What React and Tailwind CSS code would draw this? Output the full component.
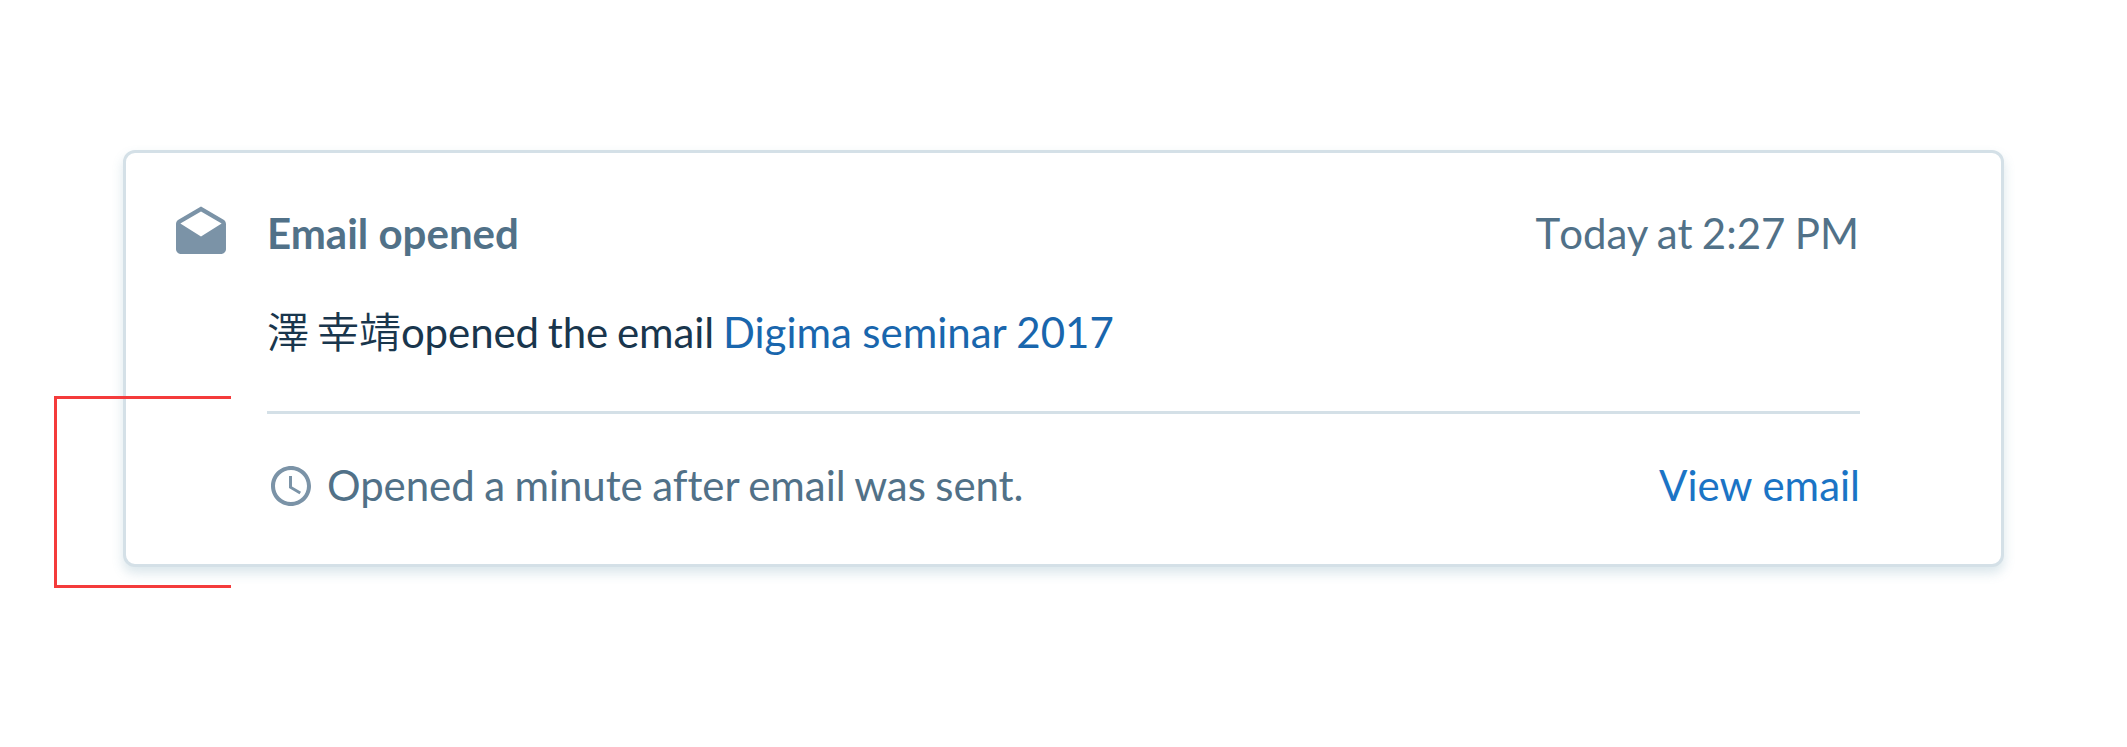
function DraftsIcon() {
  return (
    <svg viewBox="0 0 24 24" className="h-[60px] w-[60px] shrink-0 fill-[#7b93a7]" aria-hidden="true">
      <path d="M21.99 8c0-.72-.37-1.35-.94-1.7L12 1 2.95 6.3C2.38 6.65 2 7.28 2 8v10c0 1.1.9 2 2 2h16c1.1 0 2-.9 2-2l-.01-10zM12 13L3.74 7.84 12 3l8.26 4.84L12 13z" />
    </svg>
  );
}

function ClockIcon() {
  return (
    <svg viewBox="0 0 24 24" className="mt-[2px] h-12 w-12 shrink-0 fill-[#7b93a7]" aria-hidden="true">
      <path d="M11.99 2C6.47 2 2 6.48 2 12s4.47 10 9.99 10C17.52 22 22 17.52 22 12S17.52 2 11.99 2zM12 20c-4.42 0-8-3.58-8-8s3.58-8 8-8 8 3.58 8 8-3.58 8-8 8zM12.5 7H11v6l5.25 3.15.75-1.23-4.5-2.67z" />
    </svg>
  );
}

export default function App() {
  return (
    <div className="relative h-[747px] w-[2127px] bg-white px-[123px] pt-[150px] font-['Lato','Noto_Sans_CJK_JP',sans-serif] text-[42px] leading-[60px] text-[#517188]">
      <article className="flex h-[417px] w-[1881px] gap-9 rounded-[12px] border-[3px] border-[#d4e0e7] bg-white pt-[51px] pr-[141px] pl-[45px] shadow-[0_6px_12px_rgba(70,130,155,0.2)]">
        <DraftsIcon />
        <div className="-mt-px flex-1">
          <header className="flex justify-between">
            <h2 className="font-bold">Email opened</h2>
            <time className="mr-px [word-spacing:-1.4px]"><span className="tracking-[-1.1px]">T</span>oday at 2:27 PM</time>
          </header>
          <p className="mt-[39px] text-[#19364d]">
            <span className="font-[350] [word-spacing:-3.5px]">澤 幸靖</span><span className="tracking-[-0.1px] [word-spacing:-1.8px]">opened the email{" "}</span>
            <a href="#" className="[word-spacing:-0.4px] text-[#1966ad]">Digima seminar 2017</a>
          </p>
          <footer className="mt-[49px] flex items-center justify-between border-t-[3px] border-[#d4e0e7] pt-[41px]">
            <span className="flex items-center gap-3 tracking-[-0.06px] [word-spacing:-1.2px]">
              <ClockIcon />
              Opened a minute after email was sent.
            </span>
            <a href="#" className="text-[#1b74c5]">View email</a>
          </footer>
        </div>
      </article>
      <div className="absolute top-[396px] left-[54px] h-[192px] w-[177px] border-y-[3px] border-l-[3px] border-[#f43b3b]" />
    </div>
  );
}
